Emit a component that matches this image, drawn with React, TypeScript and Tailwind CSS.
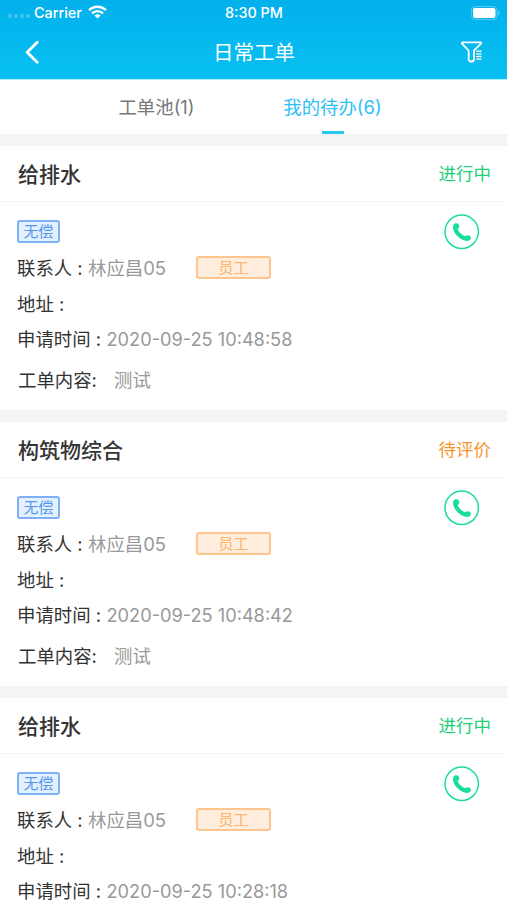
import { clsx } from 'clsx'

type Status = 'processing' | 'review'

interface WorkOrder {
  id: number
  title: string
  status: Status
  contact: string
  address: string
  time: string
  content: string
}

const orders: WorkOrder[] = [
  { id: 1, title: '给排水', status: 'processing', contact: '林应昌05', address: '', time: '2020-09-25 10:48:58', content: '测试' },
  { id: 2, title: '构筑物综合', status: 'review', contact: '林应昌05', address: '', time: '2020-09-25 10:48:42', content: '测试' },
  { id: 3, title: '给排水', status: 'processing', contact: '林应昌05', address: '', time: '2020-09-25 10:28:18', content: '测试' },
]

const statusText: Record<Status, string> = {
  processing: '进行中',
  review: '待评价',
}

function StatusBar() {
  return (
    <div className="grid h-[25px] grid-cols-3 items-center pl-2 pr-[7px] text-[14.4px] font-medium">
      <div className="flex items-center">
        <div className="mt-2 flex gap-[2px]">
          {[0, 1, 2, 3].map((dot) => (
            <span key={dot} className="size-[4px] rounded-full bg-white/25" />
          ))}
        </div>
        <span className="ml-1">Carrier</span>
        <svg className="ml-[6px]" width="19" height="14" viewBox="0 0 19 14" fill="none" stroke="currentColor" strokeWidth="2.4">
          <path d="M1 5.2a12.2 12.2 0 0 1 17 0" />
          <path d="M4 8.4a7.8 7.8 0 0 1 11 0" />
          <path d="M9.5 13.6 6.4 10.5a4.4 4.4 0 0 1 6.2 0z" fill="currentColor" stroke="none" />
        </svg>
      </div>
      <span className="text-center">8:30 PM</span>
      <svg className="justify-self-end" width="29" height="14" viewBox="0 0 29 14">
        <rect x="0.5" y="0.5" width="25.5" height="13" rx="3.5" fill="none" stroke="#fff" strokeOpacity="0.3" />
        <rect x="2" y="2" width="22.5" height="10" rx="2" fill="#fff" />
        <path d="M27.2 4.6q1.5.8 1.5 2.4t-1.5 2.4z" fill="#fff" fillOpacity="0.45" />
      </svg>
    </div>
  )
}

function Header() {
  return (
    <header className="h-[79px] bg-linear-to-b from-[#03b0ec] to-[#08c0f1] text-white">
      <StatusBar />
      <div className="grid h-[54px] grid-cols-3 items-center pl-[25px] pr-6">
        <svg width="15" height="24" viewBox="0 0 15 24" fill="none" stroke="currentColor" strokeWidth="2.8" strokeLinecap="round" strokeLinejoin="round">
          <path d="M12.2 2.2 2.2 12.2l10 10" />
        </svg>
        <h1 className="pt-0.5 text-center text-[20.5px] leading-[26px]">日常工单</h1>
        <svg className="justify-self-end" width="23" height="22" viewBox="0 0 23 22" fill="none" stroke="currentColor" strokeWidth="1.8" strokeLinecap="round" strokeLinejoin="round">
          <path d="M2 1.3H21v1.3l-7 6.7V19l-1.5 1.5h-2.4L8.7 19V9.6L2 2.7z" />
          <path d="M16.8 10.2H21M16.8 12.9H21M16.8 15.5H21M16.8 18.1H21" strokeWidth="1.4" />
        </svg>
      </div>
    </header>
  )
}

function Tabs() {
  return (
    <nav className="flex h-[55px] justify-center border-t border-[#b4effc] bg-white pr-[18px] text-[18.4px] leading-[55px]">
      <button className="w-[176px] text-[#777]">工单池(1)</button>
      <button className="flex w-[176px] flex-col items-center text-[#2cc0f5]">
        <span className="h-[51px]">我的待办(6)</span>
        <span className="h-[2.5px] w-[22px] bg-[#2cc5f2]" />
      </button>
    </nav>
  )
}

function CallButton() {
  return (
    <button className="mt-3 self-start text-[#19dca0]">
      <svg width="36" height="36" viewBox="0 0 36 36" fill="none" stroke="currentColor">
        <circle cx="17.7" cy="17.8" r="16.7" strokeWidth="1.5" />
        <path d="M11 13.2c.5 5.200 6 11 12 11.600" strokeWidth="4" strokeLinecap="round" />
        <circle cx="12.200" cy="12.200" r="3" fill="currentColor" stroke="none" />
        <ellipse cx="23.600" cy="24" rx="3.200" ry="2.800" fill="currentColor" stroke="none" />
      </svg>
    </button>
  )
}

function OrderCard({ order }: { order: WorkOrder }) {
  return (
    <article className="h-[264px] bg-white text-[18.4px] text-[#333]">
      <div className="flex h-14 items-center justify-between border-b border-[#f3f3f3] pl-[18px] pr-4 pt-0.5">
        <h2 className="text-[21px] font-medium">{order.title}</h2>
        <span
          className={clsx(
            'text-[17.5px]',
            order.status === 'processing' ? 'text-[#20cf7a]' : 'text-[#f9952e]',
          )}
        >
          {statusText[order.status]}
        </span>
      </div>

      <div className="flex justify-between pl-[17px] pr-[27px]">
        <div>
          <div className="flex h-[49px] items-start pt-[18px]">
            <span className="flex h-[23px] w-[43px] items-center justify-center rounded-[3px] border-2 border-[#7fb0f7] bg-[#e3f1ff] text-[15px] leading-none text-[#5797ee]">
              无偿
            </span>
          </div>
          <div className="flex h-9 items-center">
            <span className="w-[71px] whitespace-pre">联系人 :</span>
            <span className="w-[108px] text-[#999]">{order.contact}</span>
            <span className="mb-[3px] flex h-[23px] w-[75px] items-center justify-center rounded-[3px] border-2 border-[#fcc68e] bg-[#ffeddd] text-[15px] leading-none text-[#fbb56c]">
              员工
            </span>
          </div>
          <div className="flex h-[35px] items-center">
            <span>地址 :</span>
            <span className="text-[#999]">{order.address}</span>
          </div>
          <div className="flex h-[35px] items-center">
            <span className="w-[89.5px] whitespace-pre">申请时间 :</span>
            <span className="text-[18.2px] text-[#999]">{order.time}</span>
          </div>
          <div className="flex h-12 items-center pl-px">
            <span className="w-24">工单内容:</span>
            <span className="text-[#999]">{order.content}</span>
          </div>
        </div>
        <CallButton />
      </div>
    </article>
  )
}

export default function App() {
  return (
    <div className="h-[900px] w-[507px] overflow-hidden bg-[#f4f4f4] font-['Inter','Noto_Sans_CJK_SC',sans-serif]">
      <Header />
      <Tabs />
      <main className="flex flex-col gap-3 pt-3">
        {orders.map((order) => (
          <OrderCard key={order.id} order={order} />
        ))}
      </main>
    </div>
  )
}
